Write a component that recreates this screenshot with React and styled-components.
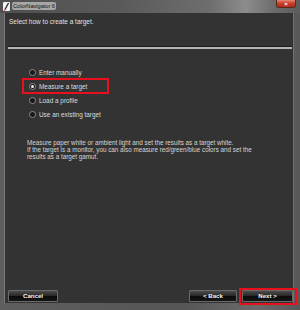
import React from "react";
import styled, { createGlobalStyle } from "styled-components";

const Global = createGlobalStyle`
  html, body { margin: 0; padding: 0; background: #2a2a2a; }
  body { font-family: "Liberation Sans", Arial, sans-serif; }
`;

const Window = styled.div`
  width: 300px;
  height: 310px;
  display: flex;
  flex-direction: column;
  background: linear-gradient(90deg, #5e5e5e 0%, #555 60%, #6a6a6a 85%, #585858 100%);
  box-sizing: border-box;
  overflow: hidden;
`;

const TitleBar = styled.div`
  height: 13px;
  flex: none;
  display: flex;
  align-items: flex-start;
  padding-left: 3px;
  background: linear-gradient(90deg, #505050 0%, #5a5a5a 40%, #6e6e6e 70%, #8c8c8c 82%, #6a6a6a 92%, #5c5c5c 100%);
`;

const AppIcon = styled.svg`
  width: 7px;
  height: 9px;
  margin-top: 2px;
  flex: none;
`;

const Title = styled.span`
  margin-left: 2px;
  margin-top: 2px;
  padding: 0 1px;
  font-size: 5.6px;
  line-height: 8px;
  color: #111;
  background: rgba(235, 235, 235, 0.55);
  border-radius: 2px;
`;

const Close = styled.div`
  margin-left: auto;
  margin-right: 4px;
  width: 20px;
  height: 8px;
  border-radius: 0 0 3px 3px;
  background: linear-gradient(180deg, #e58a78 0%, #c9402a 45%, #b42a16 100%);
  border: 1px solid #5a2a22;
  border-top: none;
  box-sizing: border-box;
  display: flex;
  align-items: center;
  justify-content: center;
  color: #fff;
  font-size: 6px;
  font-weight: bold;
  line-height: 1;
`;

const Body = styled.div`
  flex: 1;
  margin: 0 6px 7px 4px;
  background: #333333;
  border-left: 1px solid #7a7a7a;
  border-right: 1px solid #707070;
  display: flex;
  flex-direction: column;
  position: relative;
`;

const Header = styled.div`
  height: 33px;
  box-sizing: border-box;
  padding: 5px 0 0 4px;
  font-size: 6.5px;
  line-height: 8px;
  color: #e2e2e2;
`;

const Divider = styled.div`
  height: 2px;
  margin: 0 1px 0 3px;
  border-top: 1px solid #1c1c1c;
  background: #b4b4b4;
`;

const Options = styled.div`
  margin-top: 16px;
  padding-left: 24px;
  display: flex;
  flex-direction: column;
`;

const Option = styled.label`
  position: relative;
  height: 14px;
  display: flex;
  align-items: center;
  gap: 3px;
  font-size: 6.4px;
  color: #dcdcdc;
  &::after {
    content: "";
    display: ${(p) => (p.$highlight ? "block" : "none")};
    position: absolute;
    left: -7px;
    top: -1px;
    width: 87px;
    height: 16px;
    border: 2px solid #e8101c;
    box-sizing: border-box;
  }
`;

const Radio = styled.span`
  width: 7px;
  height: 7px;
  border-radius: 50%;
  box-sizing: border-box;
  background: radial-gradient(circle at 50% 40%, #222 0%, #050505 100%);
  border: 1px solid #8a8a8a;
  display: flex;
  align-items: center;
  justify-content: center;
  flex: none;
  &::before {
    content: "";
    width: 3px;
    height: 3px;
    border-radius: 50%;
    background: ${(p) => (p.$checked ? "#f0f0f0" : "transparent")};
  }
`;

const Description = styled.div`
  margin-top: 18px;
  padding-left: 22px;
  font-size: 6.3px;
  line-height: 7px;
  color: #d6d6d6;
`;

const Footer = styled.div`
  margin-top: auto;
  padding: 0 0 1px 3px;
  display: flex;
  align-items: center;
`;

const Button = styled.button`
  position: relative;
  width: ${(p) => p.$w || 50}px;
  height: 12px;
  padding: 0;
  margin: 0;
  margin-left: ${(p) => p.$ml || 0}px;
  box-sizing: border-box;
  border: 1px solid #6a6a6a;
  border-radius: 1px;
  background: linear-gradient(180deg, #4c4c4c 0%, #2a2a2a 45%, #0c0c0c 55%, #151515 100%);
  color: #f4f4f4;
  font-family: "Liberation Sans", Arial, sans-serif;
  font-weight: bold;
  font-size: 6.1px;
  line-height: 10px;
  &::after {
    content: "";
    display: ${(p) => (p.$highlight ? "block" : "none")};
    position: absolute;
    left: -4px;
    top: -3px;
    right: -5px;
    bottom: -4px;
    border: 2px solid #e8101c;
  }
`;

const Spacer = styled.div`
  flex: 1;
`;

export default function App() {
  return (
    <>
      <Global />
      <Window>
        <TitleBar>
          <AppIcon viewBox="0 0 7 9">
            <rect x="0" y="0" width="7" height="9" rx="1" fill="#f2f2f2" />
            <path d="M5.5 1 L2 7.5" stroke="#222" strokeWidth="1.3" />
            <path d="M2 7.5 L1.4 8.5" stroke="#d0201a" strokeWidth="1.3" />
          </AppIcon>
          <Title>ColorNavigator 6</Title>
          <Close>×</Close>
        </TitleBar>
        <Body>
          <Header>Select how to create a target.</Header>
          <Divider />
          <Options>
            <Option>
              <Radio />
              Enter manually
            </Option>
            <Option $highlight>
              <Radio $checked />
              Measure a target
            </Option>
            <Option>
              <Radio />
              Load a profile
            </Option>
            <Option>
              <Radio />
              Use an existing target
            </Option>
          </Options>
          <Description>
            Measure paper white or ambient light and set the results as a target white.
            <br />
            If the target is a monitor, you can also measure red/green/blue colors and set the
            <br />
            results as a target gamut.
          </Description>
          <Footer>
            <Button $w={50}>Cancel</Button>
            <Spacer />
            <Button $w={48}>&lt; Back</Button>
            <Button $w={51} $ml={5} $highlight>
              Next &gt;
            </Button>
          </Footer>
        </Body>
      </Window>
    </>
  );
}
